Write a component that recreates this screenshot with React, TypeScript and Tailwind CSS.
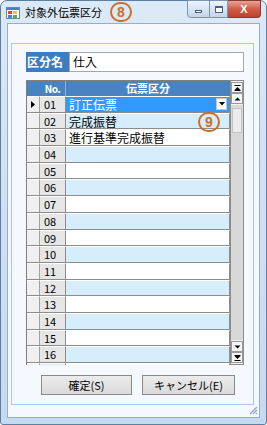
import React from 'react';

const rows = [
  { no: '01', name: '訂正伝票' },
  { no: '02', name: '完成振替' },
  { no: '03', name: '進行基準完成振替' },
  ...Array.from({ length: 14 }, (_, i) => ({ no: String(i + 4).padStart(2, '0'), name: '' })),
];

function Marker({ n }: { n: string }) {
  return (
    <div className="w-[22px] h-[20px] rounded-full border-2 border-[#c8702a] flex items-center justify-center text-[#c8702a] text-[14px] font-bold leading-none font-['Liberation_Sans',sans-serif]">
      {n}
    </div>
  );
}

function AppIcon() {
  return (
    <svg width="14" height="12" viewBox="0 0 14 12">
      <rect x="0.5" y="0.5" width="13" height="11" fill="#fff" stroke="#6d87a8" />
      <rect x="1" y="1" width="12" height="2" fill="#4a7cc0" />
      <rect x="2" y="4" width="4" height="3" fill="#e04a2a" />
      <rect x="7" y="4" width="4" height="3" fill="#f2c230" />
      <rect x="2" y="8" width="4" height="3" fill="#3f8ad8" />
      <rect x="7" y="8" width="4" height="3" fill="#57b04a" />
    </svg>
  );
}

function ScrollBtn({ kind }: { kind: 'top' | 'up' | 'down' | 'bottom' }) {
  return (
    <div className="h-[11px] w-[12px] mx-auto bg-[#f4f4f4] border border-[#9a9a9a] flex items-center justify-center">
      <svg width="7" height="6" viewBox="0 0 7 6">
        {kind === 'top' && (<><rect x="0.5" y="0" width="6" height="1" fill="#000" /><path d="M0.5 5 L3.5 2 L6.5 5Z" fill="#000" /><rect x="0.5" y="5" width="6" height="1" fill="#000" /></>)}
        {kind === 'up' && <path d="M0.5 4.5 L3.5 1.5 L6.5 4.5Z" fill="#000" />}
        {kind === 'down' && <path d="M0.5 1.5 L3.5 4.5 L6.5 1.5Z" fill="#000" />}
        {kind === 'bottom' && (<><rect x="0.5" y="0" width="6" height="1" fill="#000" /><path d="M0.5 1 L3.5 4 L6.5 1Z" fill="#000" /><rect x="0.5" y="5" width="6" height="1" fill="#000" /></>)}
      </svg>
    </div>
  );
}

export default function App() {
  return (
    <div className="relative w-[267px] h-[425px] bg-white font-['Noto_Sans_CJK_JP','Liberation_Sans',sans-serif]">
      <div className="w-full h-full rounded-t-[7px] rounded-b-[3px] border border-[#5f7ea6] bg-gradient-to-b from-[#dce9f6] via-[#cfe0f2] to-[#c6daef] flex flex-col">
        {/* Title bar */}
        <div className="h-[22px] flex items-start relative">
          <div className="mt-[6px] ml-[5px]"><AppIcon /></div>
          <span className="mt-[4px] ml-[5px] text-[11px] leading-[14px] text-black">対象外伝票区分</span>
          <div className="ml-[8px] mt-[1px]"><Marker n="8" /></div>
          <div className="ml-auto mr-[5px] flex -mt-px">
            <div className="w-[23px] h-[18px] border border-[#7b93b5] rounded-bl-[4px] bg-gradient-to-b from-[#eef4fb] to-[#c3d5ea] flex items-center justify-center">
              <div className="w-[7px] h-[3px] border border-[#4a5f80] bg-white mt-[4px]" />
            </div>
            <div className="w-[18px] h-[18px] border border-l-0 border-[#7b93b5] bg-gradient-to-b from-[#eef4fb] to-[#c3d5ea] flex items-center justify-center">
              <div className="w-[8px] h-[7px] border border-[#4a5f80] border-t-2 bg-white" />
            </div>
            <div className="w-[33px] h-[18px] border border-l-0 border-[#8a3a32] rounded-br-[4px] bg-gradient-to-b from-[#e8a394] via-[#cf5b48] to-[#c0412e] flex items-center justify-center text-white text-[11px] font-bold leading-none font-['Liberation_Sans',sans-serif]">
              X
            </div>
          </div>
        </div>

        {/* Client area */}
        <div className="mx-[6px] mb-[6px] flex-1 border border-[#8fb0d4] bg-[#f5f9fd] pt-[19px] pl-[3px] pr-[5px] pb-[12px] flex flex-col">
          <div className="flex-1 border border-[#a9c8e8] bg-[#f5f9fd] pt-[8px] pl-[14px] pr-[9px] flex flex-col">
            {/* Name field */}
            <div className="flex h-[20px]">
              <div className="w-[43px] bg-[#3d7cc0] text-white text-[12px] font-bold leading-[20px] pl-[1px]">区分名</div>
              <div className="flex-1 border border-[#a8a8a8] bg-white text-[12px] leading-[18px] pl-[3px] text-black">仕入</div>
            </div>

            {/* Grid */}
            <div className="mt-[8px] h-[285px] flex">
              <div className="flex-1 border-l border-t border-[#7f7f7f] overflow-hidden flex flex-col">
                <div className="h-[15px] shrink-0 flex bg-[#4a84c0] text-white text-[10px] font-bold leading-[15px]">
                  <div className="w-[13px]" />
                  <div className="w-[26px] text-center tracking-tighter border-r border-[#8fb4db]">No.</div>
                  <div className="flex-1 text-center text-[11px]">伝票区分</div>
                </div>
                {rows.map((r, i) => {
                  const selected = i === 0;
                  const bg = selected ? 'bg-[#3399ff]' : i % 2 === 1 ? 'bg-[#d6edfc]' : 'bg-white';
                  return (
                    <div key={r.no} className="h-[16.7px] shrink-0 flex border-b border-[#8c8c8c]">
                      <div className="w-[13px] bg-[#f0f0f0] border-t border-white border-r border-r-[#a0a0a0] flex items-center justify-center">
                        {selected && (
                          <svg width="4" height="7" viewBox="0 0 4 7"><path d="M0 0 L4 3.5 L0 7Z" fill="#000" /></svg>
                        )}
                      </div>
                      <div className="w-[26px] bg-[#e6e6e6] border-t border-white border-r border-r-[#8c8c8c] text-[11px] leading-[15px] pl-[4px] text-black">{r.no}</div>
                      <div className={`flex-1 ${bg} border-t border-white border-r border-r-[#8c8c8c] flex items-center`}>
                        <span className={`text-[12px] leading-[15px] pl-[3px] ${selected ? 'text-white' : 'text-black'}`}>{r.name}</span>
                        {selected && (
                          <div className="ml-auto mr-[2px] w-[11px] h-[12px] bg-white border border-[#c8c8c8] flex items-center justify-center">
                            <svg width="6" height="4" viewBox="0 0 6 4"><path d="M0 0 L6 0 L3 3.5Z" fill="#000" /></svg>
                          </div>
                        )}
                      </div>
                    </div>
                  );
                })}
              </div>
              {/* Scrollbar */}
              <div className="w-[14px] border border-[#8c8c8c] bg-[#d8d8d8] flex flex-col">
                <div className="bg-[#f0f0f0] pt-px pb-px">
                  <ScrollBtn kind="top" />
                  <ScrollBtn kind="up" />
                </div>
                <div className="mt-[3px] mx-[1px] h-[25px] bg-[#ececec] border border-[#c4c4c4]" />
                <div className="mt-auto bg-[#f0f0f0] pt-px pb-px">
                  <ScrollBtn kind="down" />
                  <ScrollBtn kind="bottom" />
                </div>
              </div>
            </div>

            {/* Buttons */}
            <div className="mt-[10px] flex gap-[10px] pl-[15px]">
              <button className="w-[91px] h-[20px] p-0 border border-[#8a8a8a] bg-gradient-to-b from-[#ececec] to-[#dadada] text-[11px] leading-[18px] text-black">確定(S)</button>
              <button className="w-[93px] h-[20px] p-0 border border-[#8a8a8a] bg-gradient-to-b from-[#ececec] to-[#dadada] text-[11px] leading-[18px] text-black">キャンセル(E)</button>
            </div>
          </div>
          <div className="h-0 relative">
            <svg className="absolute right-[-4px] bottom-[-10px]" width="9" height="9" viewBox="0 0 9 9">
              <path d="M8 1 L1 8 M8 4 L4 8 M8 7 L7 8" stroke="#8aa4c2" strokeWidth="1.2" />
            </svg>
          </div>
        </div>
      </div>
      {/* Marker 9 over grid */}
      <div className="absolute left-[198px] top-[112px]"><Marker n="9" /></div>
    </div>
  );
}
